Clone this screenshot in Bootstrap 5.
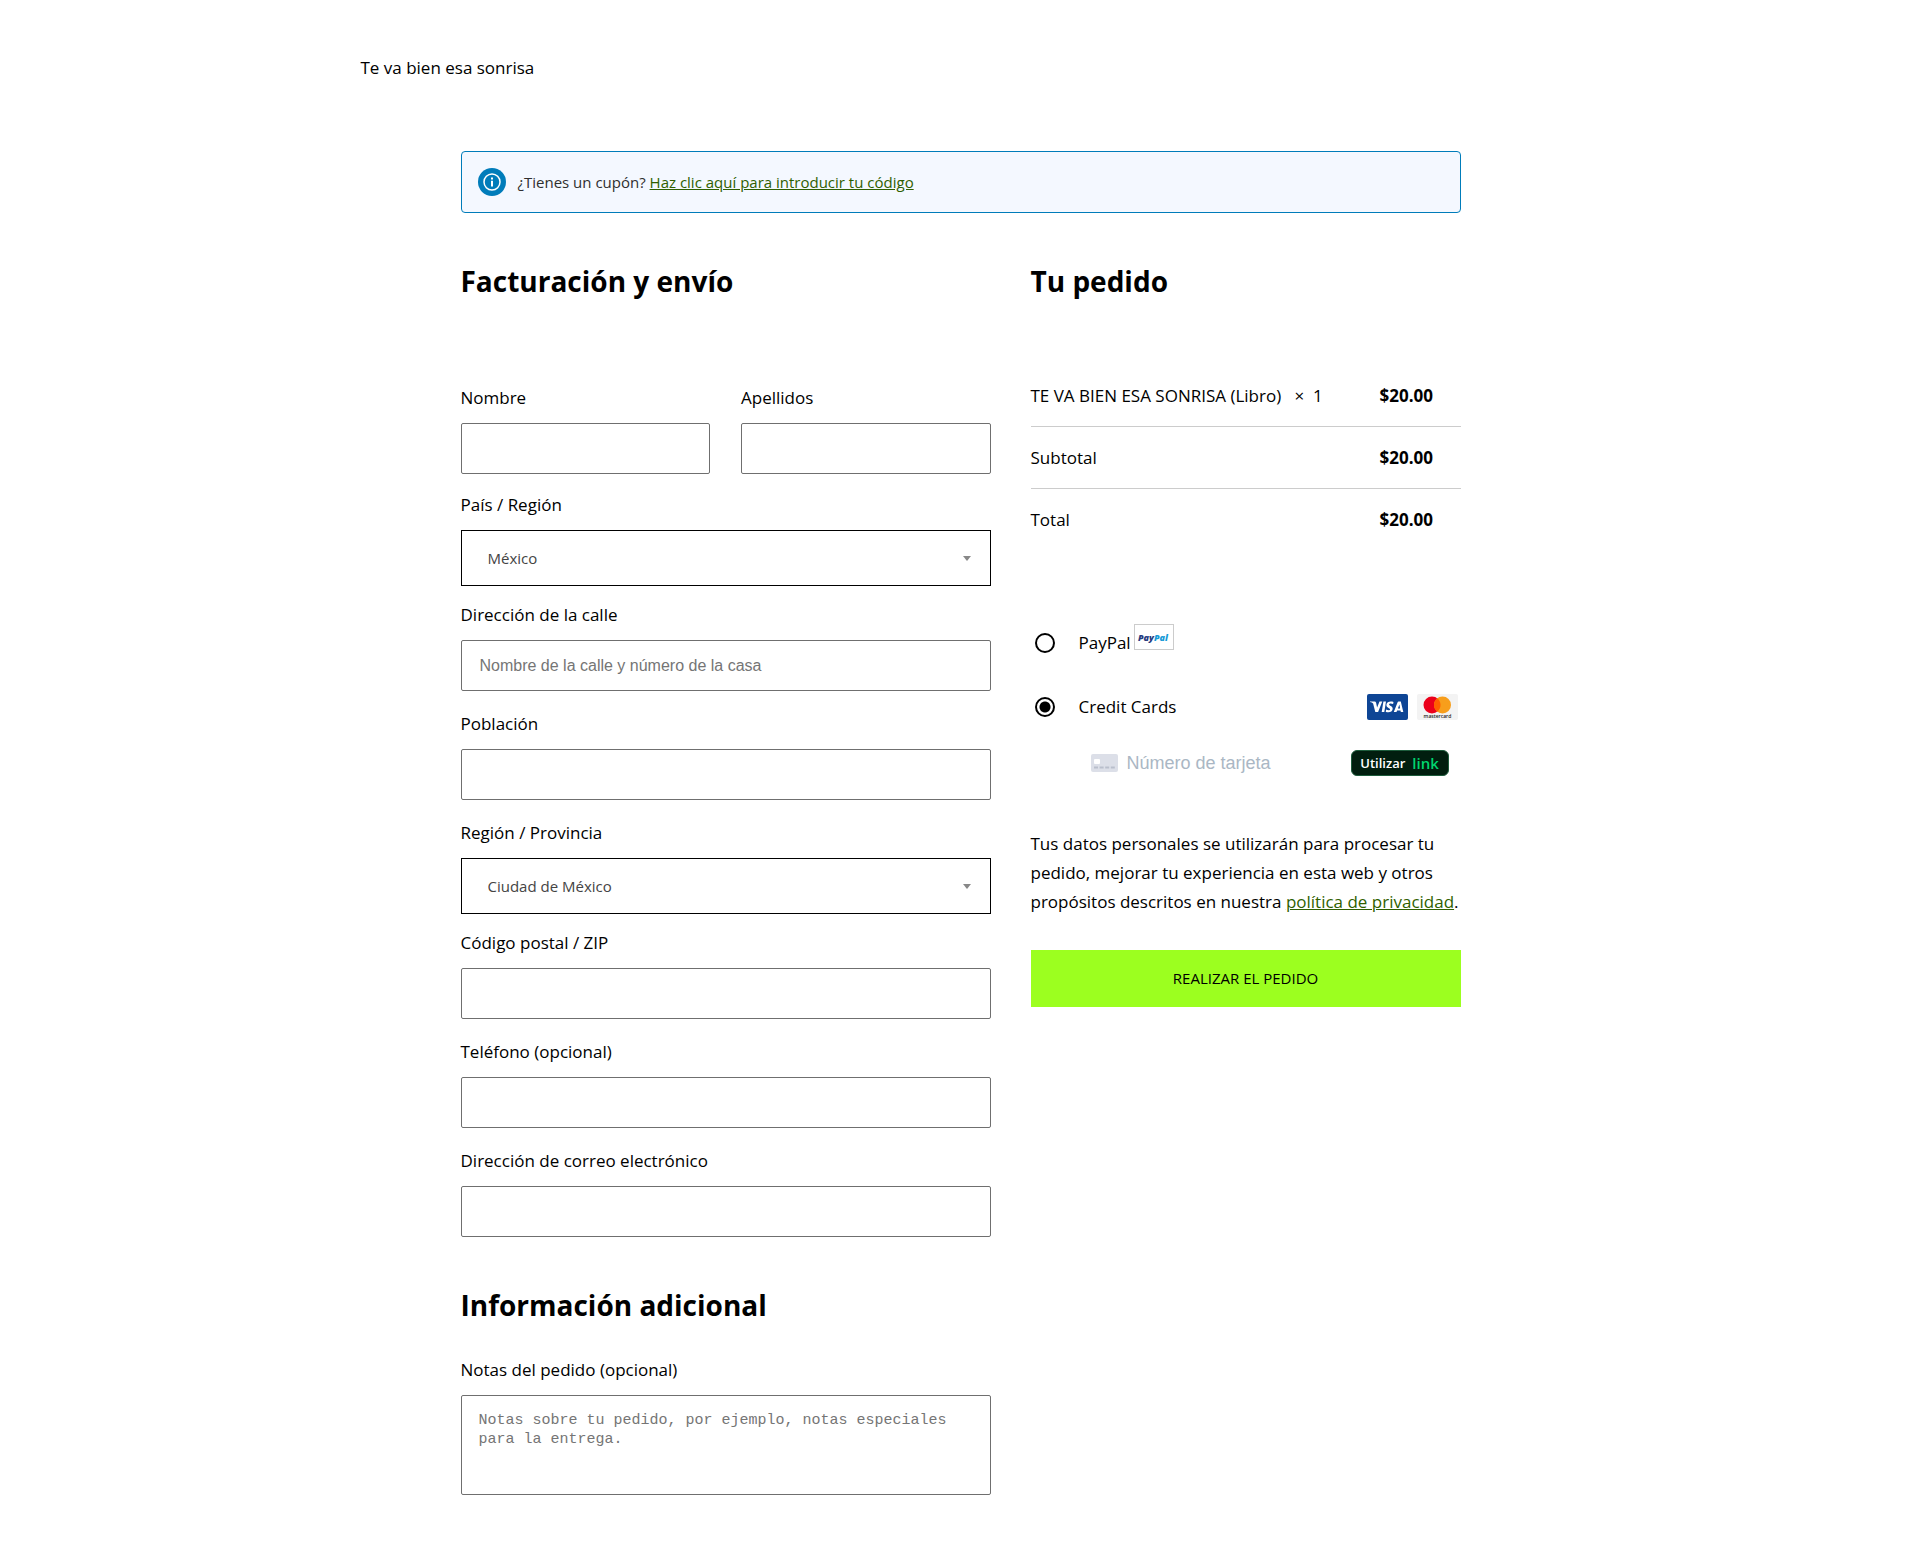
<!DOCTYPE html>
<html lang="es">
<head>
<meta charset="utf-8">
<meta name="viewport" content="width=device-width, initial-scale=1">
<title>Te va bien esa sonrisa</title>
<link href="https://cdn.jsdelivr.net/npm/bootstrap@5.3.0/dist/css/bootstrap.min.css" rel="stylesheet">
<style>
body{font-family:"Open Sans","Noto Sans",sans-serif;font-size:17px;line-height:29px;color:#000;background:#fff}
.site-head{max-width:1200px;padding:53px 0 69px}
.site-head a{color:#000}
.checkout{max-width:1000px;padding-bottom:72px}
.green-link{color:#2f5f00;text-decoration:underline}
.notice{border:1px solid #007cba;border-radius:4px;background:#f4f8ff;color:#2f2f2f;padding:16px;gap:12px;font-size:15px;line-height:28px}
h2{font-size:28px;line-height:40px;font-weight:700;margin:48px 0 30px}
.columns{gap:0 40px}
.billing{flex:53 1 0;min-width:300px}
.order{flex:43 1 0;min-width:300px}
.fields{padding-top:52px}
.names{gap:0 31px;margin-bottom:16px}
.form-label{display:block;margin:0 0 11px;font-size:17px;line-height:29px}
.field{margin-bottom:18px}
.field-select{margin-bottom:14px}
.form-control{height:51px;border:1px solid #6f6f6f;border-radius:2px;padding:0 18px;color:#000;font-family:"Liberation Sans",sans-serif;font-size:16px}
.form-control::placeholder{color:#757575}
textarea.form-control{height:100px;padding:15px 17px;font-family:"Liberation Mono",monospace;font-size:15px;line-height:19px;resize:none}
.form-select{height:56px;border:1px solid #000;border-radius:0;padding:0 40px 0 26px;color:#444;font-size:15px;line-height:24px;background-image:url("data:image/svg+xml,%3Csvg xmlns='http://www.w3.org/2000/svg' viewBox='0 0 8 5'%3E%3Cpath fill='%23888' d='M0 0h8L4 5z'/%3E%3C/svg%3E");background-size:8px 5px;background-position:right 19px center}
.totals{width:100%;margin-top:64px}
.totals tr+tr{border-top:1px solid #ccc}
.totals th{font-weight:400;padding:16px 0}
.totals td{font-weight:700;padding:16px 25px 16px 0;width:81px}
.pay-methods{padding-top:78px}
.pay-row{gap:24px;padding-left:4px;margin-bottom:35px}
.pay-row+.pay-row{margin-bottom:28px}
.pay-row .form-check-input{width:20px;height:20px;margin:0;border:2px solid #000;background:#fff;flex:none}
.pay-row .form-check-input:checked{background:radial-gradient(circle,#000 5px,#fff 6px)}
.pay-row label{gap:3px}
.paypal-mark{margin-top:-4px}
.brands{gap:9px;padding-right:3px}
.card-row{padding:0 12px 0 60px;gap:9px;height:28px}
.card-row .card-number{border:0;padding:0;height:28px;min-width:0;flex:1;font:18px/28px "Liberation Sans",sans-serif;background:none}
.card-number::placeholder{color:#aab7c4;opacity:1}
.link-btn{height:26px;width:98px;border:1px solid #1d5c3c;border-radius:6px;background:#011e0f;color:#fff;font-size:13px;line-height:24px;font-weight:600;padding:0;gap:7px}
.link-btn span{color:#00d66f;font-size:15px}
.privacy{margin:52px 0 34px}
.place-btn{height:57px;border-radius:0;background:#9cff1f;color:#000;font-size:15px}
.place-btn:hover{background:#8bea14}
</style>
</head>
<body>
<header class="container-fluid site-head"><a class="text-decoration-none" href="#">Te va bien esa sonrisa</a></header>
<main class="container-fluid checkout px-0">
  <div class="notice d-flex align-items-center">
    <svg width="28" height="28" viewBox="0 0 28 28" aria-hidden="true"><circle cx="14" cy="14" r="14" fill="#007cba"/><circle cx="14" cy="14" r="8" fill="none" stroke="#fff" stroke-width="1.5"/><path fill="#fff" d="M13 9.6h2v2h-2zM13 12.8h2v5.600h-2z"/></svg>
    <div>¿Tienes un cupón? <a class="green-link" href="#">Haz clic aquí para introducir tu código</a></div>
  </div>
  <form class="columns d-flex flex-wrap align-items-start">
    <div class="billing">
      <h2>Facturación y envío</h2>
      <div class="fields">
        <div class="names d-flex">
          <div class="flex-fill"><label class="form-label" for="nombre">Nombre</label><input class="form-control" id="nombre" type="text"></div>
          <div class="flex-fill"><label class="form-label" for="apellidos">Apellidos</label><input class="form-control" id="apellidos" type="text"></div>
        </div>
        <div class="field-select"><label class="form-label" for="pais">País / Región</label><select class="form-select" id="pais"><option>México</option></select></div>
        <div class="field"><label class="form-label" for="calle">Dirección de la calle</label><input class="form-control" id="calle" type="text" placeholder="Nombre de la calle y número de la casa"></div>
        <div class="field"><label class="form-label" for="poblacion">Población</label><input class="form-control" id="poblacion" type="text"></div>
        <div class="field-select"><label class="form-label" for="region">Región / Provincia</label><select class="form-select" id="region"><option>Ciudad de México</option></select></div>
        <div class="field"><label class="form-label" for="cp">Código postal / ZIP</label><input class="form-control" id="cp" type="text"></div>
        <div class="field"><label class="form-label" for="tel">Teléfono (opcional)</label><input class="form-control" id="tel" type="tel"></div>
        <div><label class="form-label" for="correo">Dirección de correo electrónico</label><input class="form-control" id="correo" type="email"></div>
      </div>
      <h2>Información adicional</h2>
      <label class="form-label" for="notas">Notas del pedido (opcional)</label>
      <textarea class="form-control" id="notas" placeholder="Notas sobre tu pedido, por ejemplo, notas especiales para la entrega."></textarea>
    </div>
    <div class="order">
      <h2>Tu pedido</h2>
      <table class="totals">
        <tbody>
          <tr><th scope="row">TE VA BIEN ESA SONRISA (Libro)&nbsp;&nbsp; ×&nbsp; 1</th><td>$20.00</td></tr>
          <tr><th scope="row">Subtotal</th><td>$20.00</td></tr>
          <tr><th scope="row">Total</th><td>$20.00</td></tr>
        </tbody>
      </table>
      <div class="pay-methods">
        <div class="pay-row d-flex align-items-center">
          <input class="form-check-input" type="radio" name="pago" id="paypal">
          <label class="d-flex align-items-start" for="paypal">PayPal
            <svg class="paypal-mark" width="40" height="26" viewBox="0 0 40 26" aria-hidden="true"><rect x=".5" y=".5" width="39" height="25" fill="#fff" stroke="#ccc"/><text x="4" y="17" font-family="Open Sans,sans-serif" font-size="9" font-weight="800" font-style="italic" fill="#253b80">Pay<tspan fill="#179bd7">Pal</tspan></text></svg>
          </label>
        </div>
        <div class="pay-row d-flex align-items-center">
          <input class="form-check-input" type="radio" name="pago" id="tarjeta" checked>
          <label for="tarjeta">Credit Cards</label>
          <div class="brands d-flex ms-auto">
            <svg width="41" height="26" viewBox="0 0 41 26" role="img" aria-label="Visa"><rect width="41" height="26" rx="2" fill="#0e4595"/><path fill="#fff" d="M3 7.5h4.5q1.300 0 1.600 1.200l1 4.900 2.400-6.100h2.800l-4.200 10.600H8.300L6.100 9.600Q5 8.400 3 8zM16.400 7.500h2.600l-1.700 10.600h-2.600zM26.500 7.900l-.4 2.200c-2-1-4-.7-4 .4 0 1.200 3.600 1.500 3.600 4.300 0 3.300-4.100 4.200-7 3l.5-2.300c1.800.9 3.900.9 3.900-.3s-3.700-1.400-3.700-4.300c0-3.200 4.100-4.200 7.100-3zM31.500 7.500h2.300l2.500 10.600h-2.500l-.3-1.500h-3.400l-.6 1.500h-2.700l3.700-9.600q.4-1 1-1zM32.400 10.400l-1.500 4.100h2.200z"/></svg>
            <svg width="41" height="26" viewBox="0 0 41 26" role="img" aria-label="Mastercard"><rect width="41" height="26" rx="2" fill="#f3f3f3"/><circle cx="15" cy="11" r="8.500" fill="#eb001b"/><circle cx="25.500" cy="11" r="8.500" fill="#f79e1b"/><path fill="#ff5f00" d="M20.250 4.300a8.500 8.500 0 0 1 0 13.400 8.500 8.500 0 0 1 0-13.400z"/><text x="20.500" y="24" text-anchor="middle" font-family="Open Sans,sans-serif" font-size="5" font-weight="600" fill="#222">mastercard</text></svg>
          </div>
        </div>
        <div class="card-row d-flex align-items-center">
          <svg width="27" height="18" viewBox="0 0 27 18" aria-hidden="true"><rect width="27" height="18" rx="2" fill="#dcdfe8"/><rect x="3" y="5" width="6" height="5" rx="1" fill="#fff"/><path d="M3 13.500h21" stroke="#b9bfcc" stroke-width="2" stroke-dasharray="4 1.600"/></svg>
          <input class="card-number" type="text" aria-label="Número de tarjeta" placeholder="Número de tarjeta">
          <button class="link-btn d-flex align-items-center justify-content-center" type="button">Utilizar <span>link</span></button>
        </div>
      </div>
      <p class="privacy">Tus datos personales se utilizarán para procesar tu pedido, mejorar tu experiencia en esta web y otros propósitos descritos en nuestra <a class="green-link" href="#">política de privacidad</a>.</p>
      <button class="btn place-btn w-100" type="submit">REALIZAR EL PEDIDO</button>
    </div>
  </form>
</main>
<script src="https://cdn.jsdelivr.net/npm/bootstrap@5.3.0/dist/js/bootstrap.bundle.min.js"></script>
</body>
</html>
